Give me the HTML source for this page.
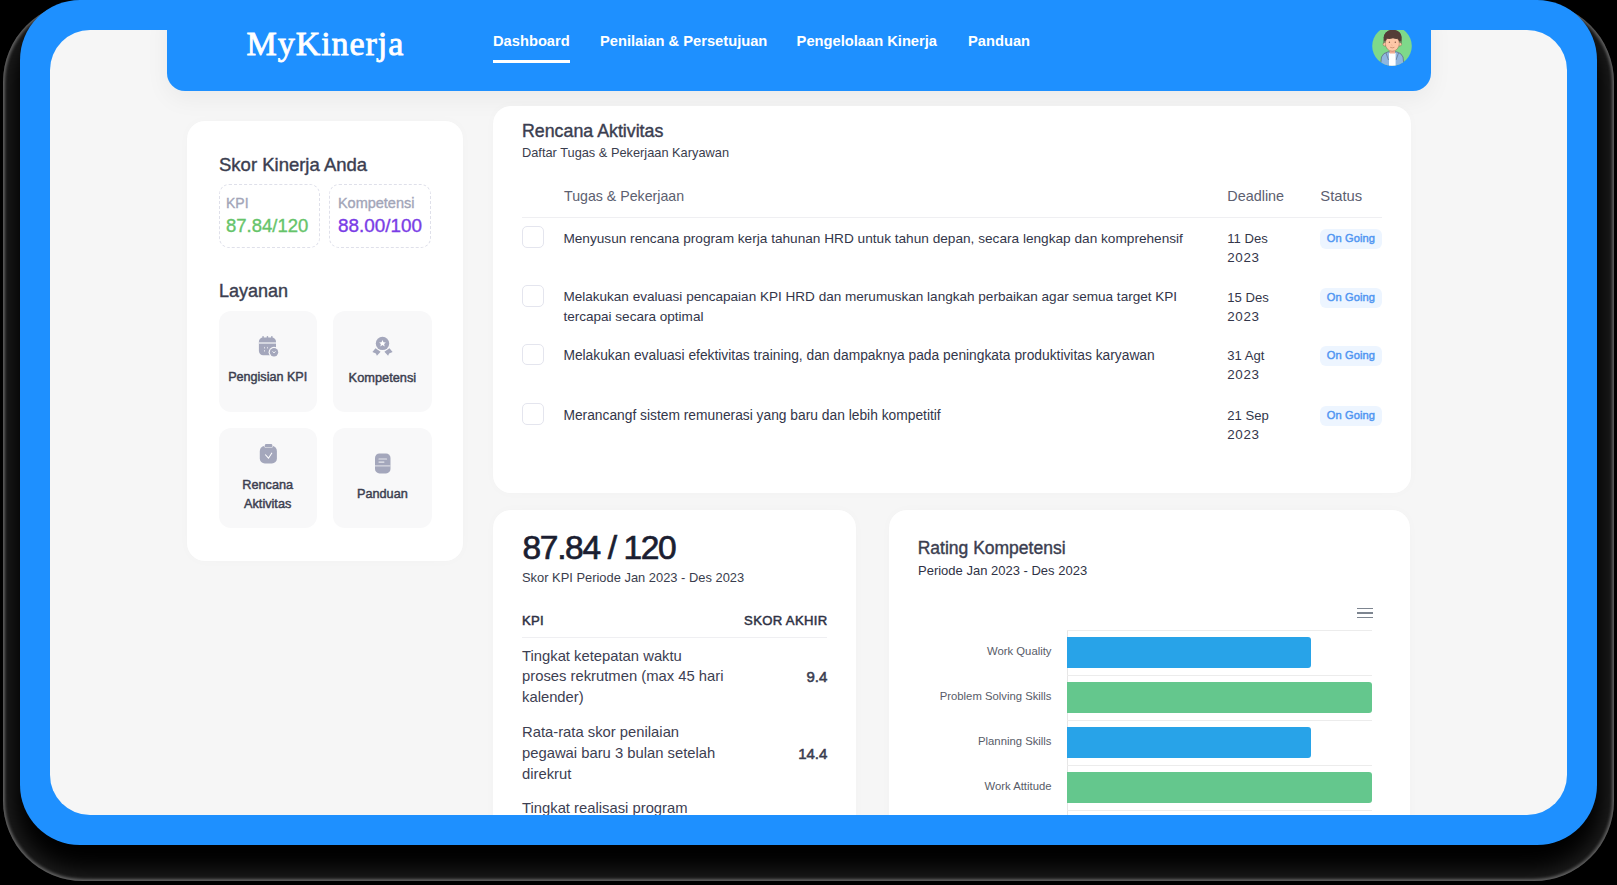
<!DOCTYPE html>
<html><head><meta charset="utf-8"><style>
html,body{margin:0;padding:0;}
body{width:1617px;height:885px;background:#000;position:relative;overflow:hidden;font-family:"Liberation Sans",sans-serif;}
#halo{position:absolute;left:3px;top:2px;width:1611px;height:879px;border-radius:80px;background:#000;box-shadow:inset 0 0 3px 2px rgba(120,120,120,0.75), inset 0 0 26px 8px rgba(45,45,45,0.8);}
#frame{position:absolute;left:20px;top:0;width:1577px;height:845px;background:#1e90ff;border-radius:60px;}
#content{position:absolute;left:50px;top:30px;width:1517px;height:785px;background:#f6f6f6;border-radius:40px;overflow:hidden;}
.t{position:absolute;white-space:nowrap;}
.r{position:absolute;}
</style></head><body>
<div id="halo"></div>
<div id="frame"></div>
<div id="content">
<div class="r" style="left:117.00px;top:-20.00px;width:1264.00px;height:80.50px;background:#1e90ff;border-radius:0 0 18px 18px;box-shadow:0 8px 24px rgba(0,0,0,0.05);"></div>
<div class="t" style="top:-6.63px;font-size:34px;line-height:42.5px;font-weight:400;color:#ffffff;font-family:'Liberation Serif', serif;letter-spacing:0.95px;-webkit-text-stroke:0.85px #ffffff;left:196.50px;">MyKinerja</div>
<div class="t" style="top:2.22px;font-size:14.7px;line-height:18.38px;font-weight:700;color:#ffffff;font-family:'Liberation Sans', sans-serif;left:443.00px;">Dashboard</div>
<div class="t" style="top:2.22px;font-size:14.7px;line-height:18.38px;font-weight:700;color:#ffffff;font-family:'Liberation Sans', sans-serif;left:550.00px;">Penilaian &amp; Persetujuan</div>
<div class="t" style="top:2.22px;font-size:14.7px;line-height:18.38px;font-weight:700;color:#ffffff;font-family:'Liberation Sans', sans-serif;left:746.60px;">Pengelolaan Kinerja</div>
<div class="t" style="top:2.22px;font-size:14.7px;line-height:18.38px;font-weight:700;color:#ffffff;font-family:'Liberation Sans', sans-serif;left:918.00px;">Panduan</div>
<div class="r" style="left:443.00px;top:29.80px;width:77.00px;height:2.80px;background:#ffffff;"></div>
<svg class="r" style="left:1321.5px;top:-4.5px;width:40px;height:40px" viewBox="0 0 40 40">
<defs><clipPath id="cc"><circle cx="20" cy="20" r="19.8"/></clipPath></defs>
<circle cx="20" cy="20" r="19.8" fill="#7ed98a"/>
<g clip-path="url(#cc)">
<path d="M8.5 40 L9.5 31 Q11 27 16 25.8 L24.5 25.8 Q29.5 27 31 31 L32 40 Z" fill="#8fb6e0" stroke="#5a6478" stroke-width="0.7"/>
<path d="M14 27 L16.5 34 M26.5 27 L24 34" stroke="#5a6478" stroke-width="0.6"/>
<rect x="17" y="27" width="6.6" height="13" fill="#ffffff"/>
<rect x="17.6" y="22" width="5.4" height="5.5" fill="#f3ae93"/>
<ellipse cx="20.5" cy="11.5" rx="8.8" ry="7.6" fill="#543d37"/>
<circle cx="12.8" cy="18.2" r="1.8" fill="#fcc5a5" stroke="#7a4b3a" stroke-width="0.35"/>
<circle cx="27.8" cy="18.2" r="1.8" fill="#fcc5a5" stroke="#7a4b3a" stroke-width="0.35"/>
<ellipse cx="20.3" cy="17.6" rx="7" ry="7.6" fill="#fdc7a7" stroke="#7a4b3a" stroke-width="0.35"/>
<path d="M11.8 18 Q10.8 10 14 6.5 Q17 3.5 21 4 Q26 3.8 28.5 7.5 Q30.5 11 29.2 18 Q28 14 27 12.5 Q24 13.5 21 12.2 Q17 13.8 14 12.2 Q12.8 14 11.8 18 Z" fill="#543d37"/>
<ellipse cx="17.4" cy="16.2" rx="0.7" ry="0.8" fill="#8a5a48"/><ellipse cx="23.3" cy="16.2" rx="0.7" ry="0.8" fill="#8a5a48"/>
<path d="M19.6 19 L20.3 19.6" stroke="#c07a60" stroke-width="0.5"/>
<path d="M18.2 21.3 Q20.3 22.4 22.4 21.3" stroke="#b06a50" stroke-width="0.55" fill="none"/>
</g></svg>
<div class="r" style="left:137.00px;top:91.00px;width:276.30px;height:440.30px;background:#ffffff;border-radius:18px;box-shadow:0 0 12px rgba(0,0,0,0.018);"></div>
<div class="t" style="top:123.03px;font-size:18.5px;line-height:23.12px;font-weight:400;color:#3b3e50;font-family:'Liberation Sans', sans-serif;-webkit-text-stroke:0.4px #3b3e50;left:169.00px;">Skor Kinerja Anda</div>
<div class="r" style="left:169.00px;top:154.30px;width:100.60px;height:63.40px;border:1px dashed #dfe0ea;border-radius:10px;box-sizing:border-box;"></div>
<div class="r" style="left:279.20px;top:154.30px;width:101.40px;height:63.40px;border:1px dashed #dfe0ea;border-radius:10px;box-sizing:border-box;"></div>
<div class="t" style="top:164.50px;font-size:14px;line-height:17.5px;font-weight:400;color:#a2a5b8;font-family:'Liberation Sans', sans-serif;-webkit-text-stroke:0.35px #a2a5b8;left:176.00px;">KPI</div>
<div class="t" style="top:164.02px;font-size:14.5px;line-height:18.12px;font-weight:400;color:#a2a5b8;font-family:'Liberation Sans', sans-serif;-webkit-text-stroke:0.35px #a2a5b8;left:287.90px;">Kompetensi</div>
<div class="t" style="top:184.43px;font-size:18.5px;line-height:23.12px;font-weight:400;color:#66c46a;font-family:'Liberation Sans', sans-serif;-webkit-text-stroke:0.35px #66c46a;left:176.00px;">87.84/120</div>
<div class="t" style="top:184.04px;font-size:18.9px;line-height:23.62px;font-weight:400;color:#7a3de6;font-family:'Liberation Sans', sans-serif;-webkit-text-stroke:0.35px #7a3de6;left:287.90px;">88.00/100</div>
<div class="t" style="top:249.51px;font-size:18px;line-height:22.5px;font-weight:400;color:#3b3e50;font-family:'Liberation Sans', sans-serif;-webkit-text-stroke:0.4px #3b3e50;left:169.00px;">Layanan</div>
<div class="r" style="left:168.50px;top:281.30px;width:98.40px;height:100.30px;background:#f8f8f9;border-radius:12px;"></div>
<div class="r" style="left:283.20px;top:281.30px;width:98.40px;height:100.30px;background:#f8f8f9;border-radius:12px;"></div>
<div class="r" style="left:168.50px;top:398.00px;width:98.40px;height:100.40px;background:#f8f8f9;border-radius:12px;"></div>
<div class="r" style="left:283.20px;top:398.00px;width:98.40px;height:100.40px;background:#f8f8f9;border-radius:12px;"></div>
<div class="t" style="top:339.96px;font-size:12.6px;line-height:15.75px;font-weight:400;color:#3c3f50;font-family:'Liberation Sans', sans-serif;-webkit-text-stroke:0.45px #3c3f50;left:168.70px;width:98px;text-align:center;">Pengisian KPI</div>
<div class="t" style="top:339.76px;font-size:12.8px;line-height:16.0px;font-weight:400;color:#3c3f50;font-family:'Liberation Sans', sans-serif;-webkit-text-stroke:0.45px #3c3f50;left:283.40px;width:98px;text-align:center;">Kompetensi</div>
<div class="t" style="top:447.86px;font-size:12.7px;line-height:15.88px;font-weight:400;color:#3c3f50;font-family:'Liberation Sans', sans-serif;-webkit-text-stroke:0.45px #3c3f50;left:168.70px;width:98px;text-align:center;">Rencana</div>
<div class="t" style="top:466.86px;font-size:12.7px;line-height:15.88px;font-weight:400;color:#3c3f50;font-family:'Liberation Sans', sans-serif;-webkit-text-stroke:0.45px #3c3f50;left:168.70px;width:98px;text-align:center;">Aktivitas</div>
<div class="t" style="top:457.06px;font-size:12.7px;line-height:15.88px;font-weight:400;color:#3c3f50;font-family:'Liberation Sans', sans-serif;-webkit-text-stroke:0.45px #3c3f50;left:283.40px;width:98px;text-align:center;">Panduan</div>
<svg class="r" style="left:208px;top:305px;width:24px;height:24px" viewBox="0 0 24 24">
<rect x="0.9" y="2.6" width="17.1" height="17.7" rx="4.2" fill="#a4a7bc"/>
<rect x="4.3" y="1" width="1.5" height="3" rx="0.7" fill="#a4a7bc"/><rect x="8.7" y="1" width="1.5" height="3" rx="0.7" fill="#a4a7bc"/><rect x="13.1" y="1" width="1.5" height="3" rx="0.7" fill="#a4a7bc"/>
<rect x="0.9" y="7.0" width="17.1" height="2.0" fill="#d5d7e0"/>
<rect x="6.0" y="11.9" width="1" height="1.6" fill="#dcdde5"/><rect x="6.0" y="15.0" width="1" height="1.6" fill="#dcdde5"/><rect x="9.0" y="11.9" width="1" height="1.6" fill="#dcdde5"/>
<circle cx="16" cy="17.2" r="5.4" fill="#f8f8f9"/><circle cx="16" cy="17.2" r="4.2" fill="#a4a7bc"/>
<path d="M14.5 16.3 L16 18.0 L17.5 16.3" stroke="#eceef3" stroke-width="1" fill="none"/>
</svg>
<svg class="r" style="left:322px;top:305px;width:22px;height:22px" viewBox="0 0 22 22">
<path d="M3.5 13.3 L8.6 16.7 L4.9 20.7 L3.9 18.6 L0.4 16.9 Z" fill="#a4a7bc"/>
<path d="M17.5 13.3 L12.4 16.7 L16.1 20.7 L17.1 18.6 L20.6 16.9 Z" fill="#a4a7bc"/>
<circle cx="10.5" cy="8.4" r="7.4" fill="#f8f8f9"/>
<circle cx="10.5" cy="8.4" r="6.7" fill="#a4a7bc"/>
<path d="M10.5 4.9 L11.5 7.2 L13.9 7.4 L12.1 9.0 L12.7 11.4 L10.5 10.1 L8.3 11.4 L8.9 9.0 L7.1 7.4 L9.5 7.2 Z" fill="#ffffff"/>
</svg>
<svg class="r" style="left:208px;top:413px;width:21px;height:22px" viewBox="0 0 21 22">
<rect x="1.8" y="3" width="17.1" height="17.4" rx="5" fill="#a4a7bc"/>
<rect x="6.4" y="0.7" width="8.4" height="4.2" rx="1.6" fill="#f8f8f9"/>
<rect x="6.9" y="1.1" width="7.4" height="3.3" rx="1.2" fill="#a4a7bc"/>
<path d="M7.2 11.5 L10.5 15.2 L14 9.8" stroke="#ffffff" stroke-width="1.05" fill="none"/>
</svg>
<svg class="r" style="left:323.5px;top:422.5px;width:18px;height:21px" viewBox="0 0 18 21">
<rect x="1" y="0.5" width="15.5" height="19.9" rx="4.5" fill="#a4a7bc"/>
<rect x="1" y="12.4" width="15.5" height="1.0" fill="#e6e7ec"/>
<rect x="4.4" y="5.4" width="8.7" height="1.2" rx="0.6" fill="#e6e7ec"/><rect x="4.4" y="8.5" width="6.1" height="1.2" rx="0.6" fill="#e6e7ec"/>
</svg>
<div class="r" style="left:443.00px;top:76.00px;width:918.30px;height:386.60px;background:#ffffff;border-radius:18px;box-shadow:0 0 12px rgba(0,0,0,0.018);"></div>
<div class="t" style="top:89.71px;font-size:17.8px;line-height:22.25px;font-weight:400;color:#3b3e50;font-family:'Liberation Sans', sans-serif;-webkit-text-stroke:0.4px #3b3e50;left:472.00px;">Rencana Aktivitas</div>
<div class="t" style="top:114.86px;font-size:12.8px;line-height:16.0px;font-weight:400;color:#3a3d4d;font-family:'Liberation Sans', sans-serif;left:472.00px;">Daftar Tugas &amp; Pekerjaan Karyawan</div>
<div class="t" style="top:157.60px;font-size:14.2px;line-height:17.75px;font-weight:400;color:#5c6070;font-family:'Liberation Sans', sans-serif;left:514.00px;">Tugas &amp; Pekerjaan</div>
<div class="t" style="top:157.41px;font-size:14.4px;line-height:18.0px;font-weight:400;color:#5c6070;font-family:'Liberation Sans', sans-serif;left:1177.30px;">Deadline</div>
<div class="t" style="top:157.02px;font-size:14.8px;line-height:18.5px;font-weight:400;color:#5c6070;font-family:'Liberation Sans', sans-serif;left:1270.30px;">Status</div>
<div class="r" style="left:472.00px;top:187.00px;width:860.00px;height:1.00px;background:#efeff2;"></div>
<div class="r" style="left:472.00px;top:196.40px;width:21.80px;height:21.40px;border:1.2px solid #e4e5ee;border-radius:5px;box-sizing:border-box;background:#fff;"></div>
<div class="t" style="top:199.74px;font-size:13.65px;line-height:17.06px;font-weight:400;color:#33364a;font-family:'Liberation Sans', sans-serif;left:513.40px;">Menyusun rencana program kerja tahunan HRD untuk tahun depan, secara lengkap dan komprehensif</div>
<div class="t" style="top:200.87px;font-size:13.1px;line-height:16.38px;font-weight:400;color:#33364a;font-family:'Liberation Sans', sans-serif;left:1177.30px;">11 Des</div>
<div class="t" style="top:219.58px;font-size:13.4px;line-height:16.75px;font-weight:400;color:#33364a;font-family:'Liberation Sans', sans-serif;letter-spacing:0.6px;left:1177.30px;">2023</div>
<div class="r" style="left:1270.30px;top:198.60px;width:61.50px;height:20.10px;background:#edf5ff;border-radius:6px;"></div>
<div class="t" style="top:201.81px;font-size:11.1px;line-height:13.88px;font-weight:400;color:#5196f2;font-family:'Liberation Sans', sans-serif;letter-spacing:0.1px;-webkit-text-stroke:0.45px #5196f2;left:1270.25px;width:61.5px;text-align:center;">On Going</div>
<div class="r" style="left:472.00px;top:255.40px;width:21.80px;height:21.40px;border:1.2px solid #e4e5ee;border-radius:5px;box-sizing:border-box;background:#fff;"></div>
<div class="t" style="top:258.83px;font-size:13.55px;line-height:16.94px;font-weight:400;color:#33364a;font-family:'Liberation Sans', sans-serif;left:513.40px;">Melakukan evaluasi pencapaian KPI HRD dan merumuskan langkah perbaikan agar semua target KPI</div>
<div class="t" style="top:278.63px;font-size:13.55px;line-height:16.94px;font-weight:400;color:#33364a;font-family:'Liberation Sans', sans-serif;left:513.40px;">tercapai secara optimal</div>
<div class="t" style="top:259.87px;font-size:13.1px;line-height:16.38px;font-weight:400;color:#33364a;font-family:'Liberation Sans', sans-serif;left:1177.30px;">15 Des</div>
<div class="t" style="top:278.58px;font-size:13.4px;line-height:16.75px;font-weight:400;color:#33364a;font-family:'Liberation Sans', sans-serif;letter-spacing:0.6px;left:1177.30px;">2023</div>
<div class="r" style="left:1270.30px;top:257.60px;width:61.50px;height:20.10px;background:#edf5ff;border-radius:6px;"></div>
<div class="t" style="top:260.81px;font-size:11.1px;line-height:13.88px;font-weight:400;color:#5196f2;font-family:'Liberation Sans', sans-serif;letter-spacing:0.1px;-webkit-text-stroke:0.45px #5196f2;left:1270.25px;width:61.5px;text-align:center;">On Going</div>
<div class="r" style="left:472.00px;top:313.90px;width:21.80px;height:21.40px;border:1.2px solid #e4e5ee;border-radius:5px;box-sizing:border-box;background:#fff;"></div>
<div class="t" style="top:317.09px;font-size:13.8px;line-height:17.25px;font-weight:400;color:#33364a;font-family:'Liberation Sans', sans-serif;left:513.40px;">Melakukan evaluasi efektivitas training, dan dampaknya pada peningkata produktivitas karyawan</div>
<div class="t" style="top:318.37px;font-size:13.1px;line-height:16.38px;font-weight:400;color:#33364a;font-family:'Liberation Sans', sans-serif;left:1177.30px;">31 Agt</div>
<div class="t" style="top:337.08px;font-size:13.4px;line-height:16.75px;font-weight:400;color:#33364a;font-family:'Liberation Sans', sans-serif;letter-spacing:0.6px;left:1177.30px;">2023</div>
<div class="r" style="left:1270.30px;top:316.10px;width:61.50px;height:20.10px;background:#edf5ff;border-radius:6px;"></div>
<div class="t" style="top:319.31px;font-size:11.1px;line-height:13.88px;font-weight:400;color:#5196f2;font-family:'Liberation Sans', sans-serif;letter-spacing:0.1px;-webkit-text-stroke:0.45px #5196f2;left:1270.25px;width:61.5px;text-align:center;">On Going</div>
<div class="r" style="left:472.00px;top:373.40px;width:21.80px;height:21.40px;border:1.2px solid #e4e5ee;border-radius:5px;box-sizing:border-box;background:#fff;"></div>
<div class="t" style="top:376.59px;font-size:13.8px;line-height:17.25px;font-weight:400;color:#33364a;font-family:'Liberation Sans', sans-serif;left:513.40px;">Merancangf sistem remunerasi yang baru dan lebih kompetitif</div>
<div class="t" style="top:377.87px;font-size:13.1px;line-height:16.38px;font-weight:400;color:#33364a;font-family:'Liberation Sans', sans-serif;left:1177.30px;">21 Sep</div>
<div class="t" style="top:396.58px;font-size:13.4px;line-height:16.75px;font-weight:400;color:#33364a;font-family:'Liberation Sans', sans-serif;letter-spacing:0.6px;left:1177.30px;">2023</div>
<div class="r" style="left:1270.30px;top:375.60px;width:61.50px;height:20.10px;background:#edf5ff;border-radius:6px;"></div>
<div class="t" style="top:378.81px;font-size:11.1px;line-height:13.88px;font-weight:400;color:#5196f2;font-family:'Liberation Sans', sans-serif;letter-spacing:0.1px;-webkit-text-stroke:0.45px #5196f2;left:1270.25px;width:61.5px;text-align:center;">On Going</div>
<div class="r" style="left:443.30px;top:479.50px;width:363.10px;height:390.50px;background:#ffffff;border-radius:18px;box-shadow:0 0 12px rgba(0,0,0,0.018);"></div>
<div class="t" style="top:496.95px;font-size:33.5px;line-height:41.88px;font-weight:400;color:#1b1e31;font-family:'Liberation Sans', sans-serif;letter-spacing:-1.35px;-webkit-text-stroke:0.7px #1b1e31;left:472.60px;">87.84 / 120</div>
<div class="t" style="top:540.47px;font-size:12.9px;line-height:16.12px;font-weight:400;color:#3a3d4d;font-family:'Liberation Sans', sans-serif;left:472.00px;">Skor KPI Periode Jan 2023 - Des 2023</div>
<div class="t" style="top:582.87px;font-size:13.1px;line-height:16.38px;font-weight:400;color:#2f3245;font-family:'Liberation Sans', sans-serif;letter-spacing:0.3px;-webkit-text-stroke:0.5px #2f3245;left:472.00px;">KPI</div>
<div class="t" style="top:582.87px;font-size:13.1px;line-height:16.38px;font-weight:400;color:#2f3245;font-family:'Liberation Sans', sans-serif;letter-spacing:0.35px;-webkit-text-stroke:0.5px #2f3245;left:577.60px;width:200px;text-align:right;">SKOR AKHIR</div>
<div class="r" style="left:472.00px;top:607.40px;width:305.40px;height:1.00px;background:#efeff2;"></div>
<div class="t" style="top:616.62px;font-size:14.8px;line-height:18.5px;font-weight:400;color:#3d4052;font-family:'Liberation Sans', sans-serif;left:472.00px;">Tingkat ketepatan waktu</div>
<div class="t" style="top:637.42px;font-size:14.8px;line-height:18.5px;font-weight:400;color:#3d4052;font-family:'Liberation Sans', sans-serif;left:472.00px;">proses rekrutmen (max 45 hari</div>
<div class="t" style="top:658.22px;font-size:14.8px;line-height:18.5px;font-weight:400;color:#3d4052;font-family:'Liberation Sans', sans-serif;left:472.00px;">kalender)</div>
<div class="t" style="top:637.93px;font-size:15px;line-height:18.75px;font-weight:400;color:#3a3d50;font-family:'Liberation Sans', sans-serif;-webkit-text-stroke:0.55px #3a3d50;left:677.40px;width:100px;text-align:right;">9.4</div>
<div class="t" style="top:693.22px;font-size:14.8px;line-height:18.5px;font-weight:400;color:#3d4052;font-family:'Liberation Sans', sans-serif;left:472.00px;">Rata-rata skor penilaian</div>
<div class="t" style="top:714.02px;font-size:14.8px;line-height:18.5px;font-weight:400;color:#3d4052;font-family:'Liberation Sans', sans-serif;left:472.00px;">pegawai baru 3 bulan setelah</div>
<div class="t" style="top:734.82px;font-size:14.8px;line-height:18.5px;font-weight:400;color:#3d4052;font-family:'Liberation Sans', sans-serif;left:472.00px;">direkrut</div>
<div class="t" style="top:714.53px;font-size:15px;line-height:18.75px;font-weight:400;color:#3a3d50;font-family:'Liberation Sans', sans-serif;-webkit-text-stroke:0.55px #3a3d50;left:677.40px;width:100px;text-align:right;">14.4</div>
<div class="t" style="top:769.12px;font-size:14.8px;line-height:18.5px;font-weight:400;color:#3d4052;font-family:'Liberation Sans', sans-serif;left:472.00px;">Tingkat realisasi program</div>
<div class="r" style="left:839.40px;top:480.00px;width:521.00px;height:390.00px;background:#ffffff;border-radius:18px;box-shadow:0 0 12px rgba(0,0,0,0.018);"></div>
<div class="t" style="top:507.70px;font-size:17.5px;line-height:21.88px;font-weight:400;color:#3b3e50;font-family:'Liberation Sans', sans-serif;-webkit-text-stroke:0.4px #3b3e50;left:867.70px;">Rating Kompetensi</div>
<div class="t" style="top:532.57px;font-size:13px;line-height:16.25px;font-weight:400;color:#2f3245;font-family:'Liberation Sans', sans-serif;left:868.00px;">Periode Jan 2023 - Des 2023</div>
<div class="r" style="left:1307.00px;top:577.60px;width:15.60px;height:1.40px;background:#7d8590;"></div>
<div class="r" style="left:1307.00px;top:582.20px;width:15.60px;height:1.40px;background:#7d8590;"></div>
<div class="r" style="left:1307.00px;top:586.80px;width:15.60px;height:1.40px;background:#7d8590;"></div>
<div class="r" style="left:1016.50px;top:601.00px;width:1.00px;height:184.00px;background:#e6e6e6;"></div>
<div class="r" style="left:1017.00px;top:600.20px;width:305.00px;height:1.00px;background:#ececec;"></div>
<div class="r" style="left:1017.00px;top:645.00px;width:305.00px;height:1.00px;background:#ececec;"></div>
<div class="r" style="left:1017.00px;top:689.80px;width:305.00px;height:1.00px;background:#ececec;"></div>
<div class="r" style="left:1017.00px;top:734.50px;width:305.00px;height:1.00px;background:#ececec;"></div>
<div class="r" style="left:1017.00px;top:779.50px;width:305.00px;height:1.00px;background:#ececec;"></div>
<div class="r" style="left:1017.00px;top:607.00px;width:244.00px;height:31.00px;background:#28a3e8;border-radius:0 3px 3px 0;"></div>
<div class="t" style="top:613.72px;font-size:11.3px;line-height:14.12px;font-weight:400;color:#585c68;font-family:'Liberation Sans', sans-serif;left:801.50px;width:200px;text-align:right;">Work Quality</div>
<div class="r" style="left:1017.00px;top:652.00px;width:305.00px;height:30.80px;background:#64c78d;border-radius:0 3px 3px 0;"></div>
<div class="t" style="top:658.62px;font-size:11.3px;line-height:14.12px;font-weight:400;color:#585c68;font-family:'Liberation Sans', sans-serif;left:801.50px;width:200px;text-align:right;">Problem Solving Skills</div>
<div class="r" style="left:1017.00px;top:697.30px;width:244.00px;height:30.60px;background:#28a3e8;border-radius:0 3px 3px 0;"></div>
<div class="t" style="top:703.82px;font-size:11.3px;line-height:14.12px;font-weight:400;color:#585c68;font-family:'Liberation Sans', sans-serif;left:801.50px;width:200px;text-align:right;">Planning Skills</div>
<div class="r" style="left:1017.00px;top:742.00px;width:305.00px;height:30.90px;background:#64c78d;border-radius:0 3px 3px 0;"></div>
<div class="t" style="top:748.67px;font-size:11.3px;line-height:14.12px;font-weight:400;color:#585c68;font-family:'Liberation Sans', sans-serif;left:801.50px;width:200px;text-align:right;">Work Attitude</div>
</div>
</body></html>
